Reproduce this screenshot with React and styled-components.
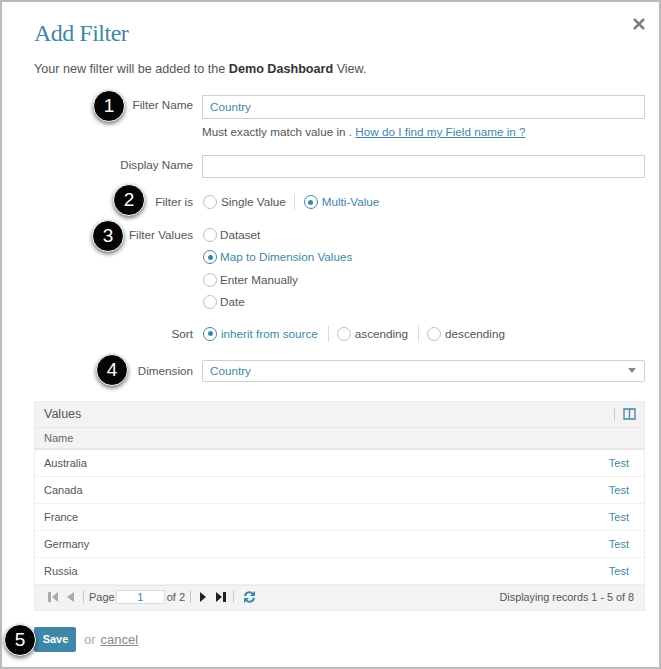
import React from 'react';
import styled, { createGlobalStyle } from 'styled-components';

const Global = createGlobalStyle`
  html, body { margin: 0; padding: 0; background: #fff; }
  * { box-sizing: border-box; }
`;

const TEAL = '#3f87a6';

const Dialog = styled.div`
  position: relative;
  width: 661px;
  height: 669px;
  border: 2px solid #bbbbbb;
  background: #fff;
  padding: 17px 14px 0 32px;
  font-family: 'Liberation Sans', Arial, sans-serif;
  font-size: 11.7px;
  color: #555;
  overflow: hidden;
`;

const Title = styled.h1`
  margin: 0;
  font-family: 'Liberation Serif', serif;
  font-weight: 400;
  font-size: 24px;
  letter-spacing: -0.5px;
  line-height: 28px;
  color: ${TEAL};
`;

const Close = styled.svg`
  position: absolute;
  top: 15px;
  right: 13px;
  width: 14px;
  height: 14px;
`;

const Intro = styled.p`
  margin: 14px 0 0;
  font-size: 12.6px;
  line-height: 16px;
  color: #555;
  b { color: #333; }
`;

const Row = styled.div`
  display: flex;
  align-items: ${({ top }) => (top ? 'flex-start' : 'center')};
  margin-top: ${({ gap }) => gap}px;
  min-height: ${({ h }) => h || 16}px;
`;

const Label = styled.div`
  width: 159px;
  flex: none;
  text-align: right;
  margin-right: 9px;
  padding-bottom: ${({ lift }) => lift || 0}px;
  line-height: 16px;
`;

const TextBox = styled.div`
  flex: 1;
  height: ${({ h }) => h}px;
  border: 1px solid #d0d0d0;
  padding: 0 8px ${({ lift }) => lift || 0}px 7px;
  display: flex;
  align-items: center;
  justify-content: space-between;
  color: ${TEAL};
  border-radius: ${({ round }) => (round ? '2px' : '0')};
`;

const Caret = styled.span`
  width: 0;
  height: 0;
  border-left: 4.5px solid transparent;
  border-right: 4.5px solid transparent;
  border-top: 5px solid #888;
`;

const Hint = styled.div`
  margin: 5px 0 0 168px;
  line-height: 16px;
  a { color: ${TEAL}; text-decoration: underline; }
`;

const Options = styled.div`
  display: flex;
  align-items: center;
`;

const Option = styled.div`
  display: flex;
  align-items: center;
  line-height: 16px;
  height: 16px;
  color: ${({ on }) => (on ? TEAL : '#555')};
  padding-right: ${({ sep }) => sep || 0}px;
  margin-right: ${({ sep, after }) => (sep ? after || 8 : 0)}px;
  border-right: ${({ sep }) => (sep ? '1px solid #ddd' : 'none')};
`;

const Circle = styled.span`
  width: 14px;
  height: 14px;
  flex: none;
  margin: 0 4px 0 1px;
  border-radius: 50%;
  border: ${({ on }) => (on ? `1.5px solid ${TEAL}` : '1px solid #bdbdbd')};
  display: flex;
  align-items: center;
  justify-content: center;
  &::after {
    content: '';
    display: ${({ on }) => (on ? 'block' : 'none')};
    width: 5px;
    height: 5px;
    border-radius: 50%;
    background: ${TEAL};
  }
`;

const Stack = styled.div`
  display: flex;
  flex-direction: column;
  gap: 6.3px;
  ${Circle} { margin-right: 3px; }
`;

const Panel = styled.div`
  margin-top: 19px;
  height: 210px;
  border: 1px solid #ececec;
`;

const PanelHead = styled.div`
  height: 26px;
  background: #f3f3f3;
  border-bottom: 1px solid #e8e8e8;
  display: flex;
  align-items: center;
  justify-content: space-between;
  padding: 0 8px 0 9px;
  font-size: 12.5px;
`;

const PanelTools = styled.div`
  display: flex;
  align-items: center;
  gap: 8px;
`;

const ToolSep = styled.span`
  width: 1px;
  height: 13px;
  background: #ccc;
`;

const ColHead = styled.div`
  height: 22px;
  background: #f3f3f3;
  border-bottom: 2px solid #e6e6e6;
  display: flex;
  align-items: center;
  padding-left: 9px;
  font-size: 11px;
  color: #666;
`;

const DataRow = styled.div`
  height: 27px;
  display: flex;
  align-items: center;
  justify-content: space-between;
  padding: 0 15px 0 9px;
  border-bottom: 1px solid #f1f1f1;
  font-size: 11px;
  a { color: ${TEAL}; }
`;

const Pager = styled.div`
  height: 25px;
  background: #f3f3f3;
  border-top: 1px solid #e8e8e8;
  display: flex;
  align-items: center;
  padding: 0 10px 2px 13px;
  font-size: 11px;
  color: #555;
`;

const PagerIcon = styled.svg`
  flex: none;
  margin-right: ${({ after }) => after || 0}px;
`;

const PagerSep = styled.span`
  width: 1px;
  height: 13px;
  background: #c8c8c8;
  margin: 0 ${({ right }) => right}px 0 ${({ left }) => left}px;
`;

const PageInput = styled.div`
  width: 49px;
  height: 14px;
  background: #fff;
  border: 1px solid #ddd;
  margin: 0 2px 0 1px;
  text-align: center;
  line-height: 12px;
  color: ${TEAL};
`;

const Records = styled.span`
  margin-left: auto;
  font-size: 10.8px;
`;

const Actions = styled.div`
  display: flex;
  align-items: center;
  margin-top: 16px;
  font-size: 13px;
  color: #aaa;
`;

const SaveButton = styled.button`
  width: 42px;
  height: 25px;
  border: none;
  border-radius: 2px;
  background: ${TEAL};
  color: #fff;
  font: bold 11px 'Liberation Sans', Arial, sans-serif;
  padding: 0 0 0 1px;
  margin-right: 8px;
`;

const Cancel = styled.a`
  margin-left: 5px;
  color: #888;
  text-decoration: underline;
`;

const Badge = styled.div`
  position: absolute;
  left: ${({ x }) => x - 18}px;
  top: ${({ y }) => y - 18}px;
  width: 32px;
  height: 32px;
  border-radius: 50%;
  background: #050505;
  border: 1px solid #fff;
  box-shadow: 0 2px 4px rgba(0, 0, 0, 0.55);
  color: #fff;
  font: 19px/30px 'Liberation Sans', Arial, sans-serif;
  text-align: center;
`;

const Radio = ({ on, sep, after, children }) => (
  <Option on={on} sep={sep} after={after}>
    <Circle on={on} />
    {children}
  </Option>
);

const Glyph = ({ d, color = '#222', w, after }) => (
  <PagerIcon width={w} height="12" viewBox={`0 0 ${w} 12`} after={after}>
    <path d={d} fill={color} />
  </PagerIcon>
);

const rows = ['Australia', 'Canada', 'France', 'Germany', 'Russia'];

export default function App() {
  return (
    <Dialog>
      <Global />
      <Title>Add Filter</Title>
      <Close viewBox="0 0 14 14">
        <path d="M2 2l10 10M12 2L2 12" stroke="#808080" strokeWidth="2.6" />
      </Close>
      <Intro>Your new filter will be added to the <b>Demo Dashboard</b> View.</Intro>

      <Row gap={18} h={24}>
        <Label lift={4}>Filter Name</Label>
        <TextBox h={24} lift={2}>Country</TextBox>
      </Row>
      <Hint>Must exactly match value in . <a>How do I find my Field name in ?</a></Hint>
      <Row gap={15} h={23}>
        <Label lift={3}>Display Name</Label>
        <TextBox h={23} />
      </Row>
      <Row gap={16}>
        <Label>Filter is</Label>
        <Options>
          <Radio sep={8}>Single Value</Radio>
          <Radio on>Multi-Value</Radio>
        </Options>
      </Row>
      <Row gap={17} top>
        <Label>Filter Values</Label>
        <Stack>
          <Radio>Dataset</Radio>
          <Radio on>Map to Dimension Values</Radio>
          <Radio>Enter Manually</Radio>
          <Radio>Date</Radio>
        </Stack>
      </Row>
      <Row gap={16}>
        <Label>Sort</Label>
        <Options>
          <Radio on sep={10} after={7}>inherit from source</Radio>
          <Radio sep={10} after={7}>ascending</Radio>
          <Radio>descending</Radio>
        </Options>
      </Row>
      <Row gap={18} h={22}>
        <Label>Dimension</Label>
        <TextBox h={22} round>Country<Caret /></TextBox>
      </Row>

      <Panel>
        <PanelHead>
          Values
          <PanelTools>
            <ToolSep />
            <svg width="13" height="12" viewBox="0 0 13 12">
              <path d="M1 1h11v10H1zM6.5 1v10" fill="none" stroke={TEAL} strokeWidth="1.3" />
            </svg>
          </PanelTools>
        </PanelHead>
        <ColHead>Name</ColHead>
        {rows.map((name) => (
          <DataRow key={name}>{name}<a>Test</a></DataRow>
        ))}
        <Pager>
          <Glyph color="#aaa" w={10} after={9} d="M0 1h3v10H0zM10 1v10L4 6z" />
          <Glyph color="#aaa" w={7} d="M7 1v10L0 6z" />
          <PagerSep left={9} right={5} />
          Page
          <PageInput>1</PageInput>
          of 2
          <PagerSep left={5} right={9} />
          <Glyph w={6} after={10} d="M0 1v10l6-5z" />
          <Glyph w={10} d="M0 1v10l6-5zM7 1h3v10H7z" />
          <PagerSep left={7} right={9} />
          <svg width="13" height="12" viewBox="0 0 13 12">
            <path d="M2 5a4.5 4.5 0 0 1 8-2M11 7a4.5 4.5 0 0 1-8 2" fill="none" stroke={TEAL} strokeWidth="2" />
            <path d="M12 0v5H7zM1 12V7h5z" fill={TEAL} />
          </svg>
          <Records>Displaying records 1 - 5 of 8</Records>
        </Pager>
      </Panel>

      <Actions>
        <SaveButton>Save</SaveButton>
        or <Cancel>cancel</Cancel>
      </Actions>

      <Badge x={109} y={106}>1</Badge>
      <Badge x={129} y={200}>2</Badge>
      <Badge x={108} y={236}>3</Badge>
      <Badge x={112} y={370}>4</Badge>
      <Badge x={20} y={640}>5</Badge>
    </Dialog>
  );
}
